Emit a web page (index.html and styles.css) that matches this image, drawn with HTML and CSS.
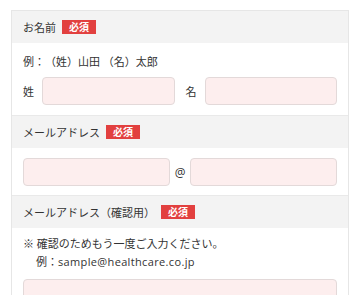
FILE: index.html
```html
<!DOCTYPE html>
<html lang="ja">
<head>
    <meta charset="UTF-8">
    <meta name="viewport" content="width=device-width, initial-scale=1.0">
    <title>お問い合わせフォーム</title>
    <link rel="stylesheet" href="styles.css">
</head>
<body>
    <form class="form-box">
        <div class="field-head">
            <span>お名前</span>
            <span class="required">必須</span>
        </div>
        <div class="field-body">
            <p class="note">例：（姓）山田 （名）太郎</p>
            <div class="name-row">
                <label class="name-label">姓</label>
                <input type="text" class="text-input">
                <label class="name-label second">名</label>
                <input type="text" class="text-input">
            </div>
        </div>

        <div class="field-head">
            <span>メールアドレス</span>
            <span class="required">必須</span>
        </div>
        <div class="field-body mail">
            <div class="mail-row">
                <input type="text" class="text-input">
                <span class="at">@</span>
                <input type="text" class="text-input">
            </div>
        </div>

        <div class="field-head">
            <span>メールアドレス（確認用）</span>
            <span class="required">必須</span>
        </div>
        <div class="field-body confirm">
            <p class="note">※ 確認のためもう一度ご入力ください。</p>
            <p class="note indent">例：<span class="latin">sample@healthcare.co.jp</span></p>
            <input type="text" class="text-input wide">
        </div>
    </form>
</body>
</html>
```

FILE: styles.css
```css
* {
    margin: 0;
    padding: 0;
    box-sizing: border-box;
}

body {
    margin: 10px 11px 0;
    font-family: "Open Sans", "Noto Sans CJK JP", sans-serif;
    font-size: 11px;
    color: #333;
    background-color: #fff;
    text-spacing-trim: space-all;
}

.form-box {
    border: 1px solid #e6e6e6;
    background-color: #fff;
}

.field-head {
    display: flex;
    align-items: center;
    gap: 6px;
    height: 33px;
    padding: 0 11px;
    background-color: #f3f3f3;
    border-top: 1px solid #e9e9e9;
}

.field-head:first-child {
    border-top: none;
    height: 32px;
}

.required {
    display: inline-block;
    background-color: #e2403f;
    color: #fff;
    font-size: 10px;
    font-weight: bold;
    line-height: 14px;
    padding: 0 7px;
}

.field-body {
    padding: 10px 11px;
}

.field-body.mail {
    padding-bottom: 9px;
}

.field-body.confirm {
    padding-top: 7px;
}

.note {
    line-height: 18px;
}

.note.indent {
    padding-left: 13px;
}

.latin {
    letter-spacing: 0.35px;
}

.name-row,
.mail-row {
    display: flex;
    align-items: center;
}

.name-row {
    margin-top: 6px;
}

.mail-row {
    gap: 5px;
}

.name-label {
    margin-right: 8px;
}

.name-label.second {
    margin-left: 11px;
}

.at {
    font-size: 12px;
}

.text-input {
    flex: 1;
    min-width: 0;
    height: 28px;
    background-color: #fdeeee;
    border: 1px solid #e3d9d9;
    border-radius: 4px;
}

.text-input.wide {
    display: block;
    width: 100%;
    margin-top: 8px;
}
```
